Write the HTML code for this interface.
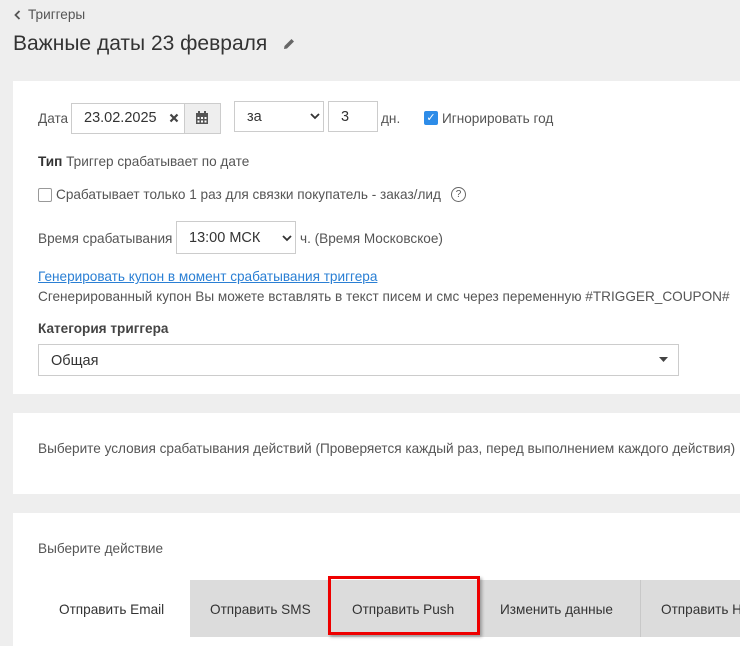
<!DOCTYPE html>
<html><head><meta charset="utf-8"><style>
*{box-sizing:border-box;margin:0;padding:0}
body{width:740px;height:646px;overflow:hidden;background:#eeeeee;font-family:"Liberation Sans","DejaVu Sans",sans-serif;color:#333;font-size:13.6px;position:relative}
.a{position:absolute;white-space:nowrap}
.panel{position:absolute;left:13px;width:727px;background:#fff}
.box{position:absolute;border:1px solid #ccc;background:#fff}
</style></head><body>
<svg class="a" style="left:14px;top:10px" width="7" height="10" viewBox="0 0 7 10"><path d="M5.5 1 L1.5 5 L5.5 9" stroke="#555" stroke-width="1.8" fill="none"/></svg>
<div class="a" style="left:28px;top:7px;color:#555">Триггеры</div>
<div class="a" style="left:13px;top:32px;font-size:21px;color:#333">Важные даты 23 февраля</div>
<svg class="a" style="left:282px;top:37px" width="14" height="14" viewBox="0 0 14 14"><path d="M2 12 L2.5 9 L9.5 2 L12 4.5 L5 11.5 Z" fill="#666"/></svg>

<div class="panel" style="top:81px;height:313px"></div>
<div class="a" style="left:38px;top:111px;color:#555">Дата</div>
<div class="box" style="left:71px;top:103px;width:150px;height:31px;background:#fff"></div>
<div class="a" style="left:84px;top:110px;font-size:14.5px">23.02.2025</div>
<svg class="a" style="left:169px;top:113px" width="10" height="10" viewBox="0 0 10 10"><path d="M1.5 1.5 L8.5 8.5 M8.5 1.5 L1.5 8.5" stroke="#444" stroke-width="2.2"/></svg>
<div class="box" style="left:184px;top:103px;width:37px;height:31px;background:#eee"></div>
<svg class="a" style="left:195px;top:111px" width="14" height="14" viewBox="0 0 14 14"><rect x="1" y="2" width="12" height="11" fill="#555"/><rect x="3" y="0" width="2" height="3" fill="#555"/><rect x="9" y="0" width="2" height="3" fill="#555"/><g fill="#fff"><rect x="2.5" y="6" width="2" height="2"/><rect x="6" y="6" width="2" height="2"/><rect x="9.5" y="6" width="2" height="2"/><rect x="2.5" y="9.5" width="2" height="2"/><rect x="6" y="9.5" width="2" height="2"/><rect x="9.5" y="9.5" width="2" height="2"/></g></svg>
<div class="box" style="left:234px;top:101px;width:90px;height:31px"></div>
<div class="a" style="left:247px;top:109px;font-size:14.5px">за</div>
<svg class="a" style="left:310px;top:113px" width="10" height="7" viewBox="0 0 10 7"><path d="M1 1 L5 5 L9 1" stroke="#333" stroke-width="1.8" fill="none"/></svg>
<div class="box" style="left:328px;top:101px;width:50px;height:31px"></div>
<div class="a" style="left:341px;top:109px;font-size:14.5px">3</div>
<div class="a" style="left:381px;top:111px;color:#555">дн.</div>
<div class="a" style="left:424px;top:111px;width:14px;height:14px;background:#2d8ce8;border-radius:2px;color:#fff;font-size:11px;line-height:14px;text-align:center">✓</div>
<div class="a" style="left:442px;top:111px;color:#555">Игнорировать год</div>
<div class="a" style="left:38px;top:154px;color:#555"><b style="color:#333">Тип</b> Триггер срабатывает по дате</div>
<div class="a" style="left:38px;top:188px;width:14px;height:14px;border:1px solid #999;border-radius:2px"></div>
<div class="a" style="left:56px;top:187px;color:#555">Срабатывает только 1 раз для связки покупатель - заказ/лид</div>
<div class="a" style="left:451px;top:187px;width:15px;height:15px;border:1px solid #666;border-radius:50%;font-size:10px;text-align:center;line-height:13px;color:#555">?</div>
<div class="a" style="left:38px;top:231px;color:#555">Время срабатывания</div>
<div class="box" style="left:176px;top:221px;width:120px;height:33px"></div>
<div class="a" style="left:189px;top:230px;font-size:14.5px">13:00 МСК</div>
<svg class="a" style="left:282px;top:235px" width="10" height="7" viewBox="0 0 10 7"><path d="M1 1 L5 5 L9 1" stroke="#333" stroke-width="1.8" fill="none"/></svg>
<div class="a" style="left:300px;top:231px;color:#555">ч. (Время Московское)</div>
<div class="a" style="left:38px;top:269px;color:#2a7fd4;text-decoration:underline">Генерировать купон в момент срабатывания триггера</div>
<div class="a" style="left:38px;top:289px;color:#555">Сгенерированный купон Вы можете вставлять в текст писем и смс через переменную #TRIGGER_COUPON#</div>
<div class="a" style="left:38px;top:321px;font-weight:bold;color:#444">Категория триггера</div>
<div class="box" style="left:38px;top:344px;width:641px;height:32px"></div>
<div class="a" style="left:51px;top:353px;font-size:14.5px">Общая</div>
<svg class="a" style="left:659px;top:357px" width="9" height="5" viewBox="0 0 9 5"><path d="M0 0 H9 L4.5 5 Z" fill="#444"/></svg>

<div class="panel" style="top:413px;height:81px"></div>
<div class="a" style="left:38px;top:441px;color:#555">Выберите условия срабатывания действий (Проверяется каждый раз, перед выполнением каждого действия)</div>

<div class="panel" style="top:513px;height:133px"></div>
<div class="a" style="left:38px;top:541px;color:#555">Выберите действие</div>
<div class="a" style="left:190px;top:580px;width:550px;height:57px;background:#dcdcdc"></div>
<div class="a" style="left:640px;top:580px;width:1px;height:57px;background:#c8c8c8"></div>
<div class="a" style="left:328px;top:576px;width:152px;height:59px;border:3px solid #e00;box-shadow:2px 2px 3px rgba(0,0,0,.3)"></div>
<div class="a" style="left:59px;top:602px;color:#333">Отправить Email</div>
<div class="a" style="left:210px;top:602px;color:#333">Отправить SMS</div>
<div class="a" style="left:352px;top:602px;color:#333">Отправить Push</div>
<div class="a" style="left:500px;top:602px;color:#333">Изменить данные</div>
<div class="a" style="left:661px;top:602px;color:#333">Отправить Н</div>
</body></html>
